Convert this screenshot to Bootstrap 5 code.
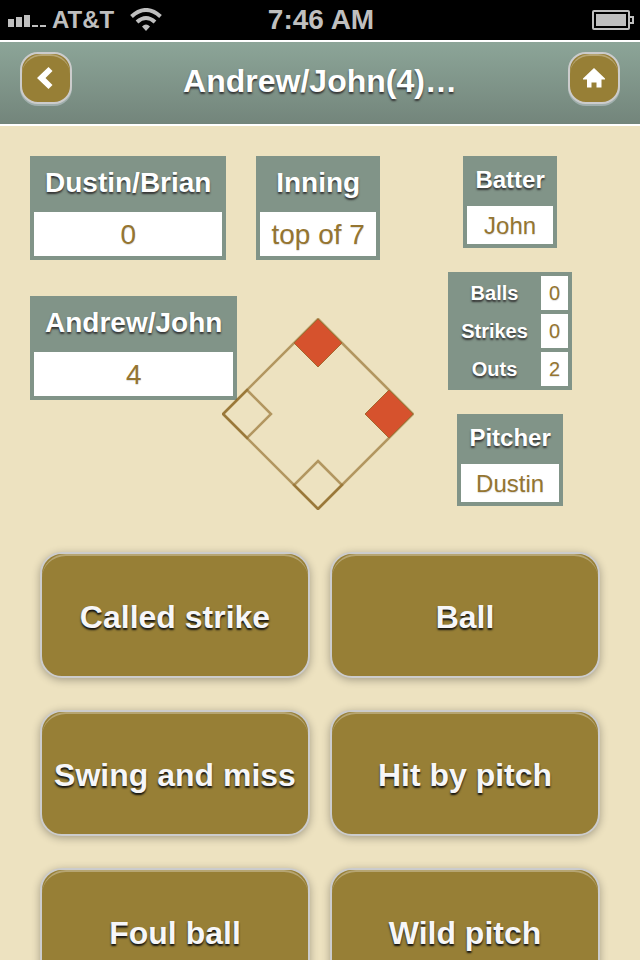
<!DOCTYPE html>
<html lang="en">
<head>
<meta charset="utf-8">
<meta name="viewport" content="width=device-width, initial-scale=1">
<title>Andrew/John(4)…</title>
<link href="https://cdn.jsdelivr.net/npm/bootstrap@5.3.0/dist/css/bootstrap.min.css" rel="stylesheet">
<style>
  body { background: #ede2c0; font-family: "Liberation Sans", Arial, sans-serif; }
  .status-strip { background: #000; color: #bfbfbf; height: 40px; padding: 0 6px 0 8px; font-weight: 700; }
  .side { flex: 1 1 0; }
  .carrier { font-size: 24px; line-height: 40px; margin: 0 16px 0 6px; }
  .clock { font-size: 28px; line-height: 40px; }
  .title-bar { background: linear-gradient(#8ca598, #73857b); border-top: 2px solid #fff; border-bottom: 2px solid #fff; height: 86px; padding: 10px 20px; }
  .title-bar h1 { font-size: 32px; line-height: 58px; font-weight: 700; color: #fff; text-shadow: 0 2px 2px #333; }
  .gold { background: #977f36; border: 2px solid #ccc; padding: 0; overflow: hidden; }
  .gold:hover { background: #a58c40; border-color: #ccc; }
  .sheen { border-top: 2px solid rgba(255,255,255,.3); }
  .tool { width: 52px; height: 52px; border-radius: 18px; box-shadow: 0 2px 0 rgba(200,210,215,.5); }
  .tool .sheen { border-radius: 20px; height: 48px; }
  .scroller { overflow-y: auto; scrollbar-width: none; padding: 30px; }
  .scroller::-webkit-scrollbar { display: none; }
  .board { border-collapse: separate; border-spacing: 4px; background: #819488; text-align: center; font-size: 28px; line-height: 28px; }
  .board th { color: #fff; font-weight: 700; padding: 9px 11px 11px; text-shadow: 0 2px 2px #333; }
  .board td { color: #957531; background: #fff; padding: 9px 11px 7px; text-shadow: 0 1px 1px #ddd; }
  .board.compact { font-size: 24px; line-height: 22px; }
  .board.compact th { padding: 9px 8px 11px; }
  .board.compact td { padding: 9px 8px 7px; }
  .board.counts { font-size: 20px; line-height: 18px; }
  .board.counts th { padding: 8px 9px; }
  .board.counts td { padding: 8px; }
  .teams { gap: 36px; }
  .top-row { gap: 30px; }
  .diamond { width: 192px; height: 192px; margin: 22px 0 0 -15px; }
  .people { gap: 24px; padding-right: 38px; }
  .plays { display: grid; grid-template-columns: 1fr 1fr; gap: 32px 20px; padding: 42px 10px 0; }
  .play { border-radius: 22px; height: 126px; box-shadow: 0 2px 8px rgba(0,0,0,.3); }
  .play .sheen { border-radius: 24px; height: 122px; font-size: 32px; line-height: 122px; font-weight: 700; color: #f6f6f8; text-shadow: 0 2px 2px #111; white-space: nowrap; }
</style>
</head>
<body class="vh-100 d-flex flex-column overflow-hidden">
<div class="status-strip d-flex align-items-center flex-shrink-0">
  <div class="side d-flex align-items-center">
    <svg width="38" height="13" viewBox="0 0 38 13" fill="#bfbfbf" aria-hidden="true"><path d="M0 5h6v8H0zM8 3h6v10H8zM16 1h6v12h-6zM24 11h6v2h-6zM32 11h6v2h-6z"/></svg>
    <span class="carrier">AT&amp;T</span>
    <svg width="32" height="24" viewBox="0 0 32 24" aria-hidden="true"><g fill="none" stroke="#bfbfbf" stroke-width="4"><path d="M1.500 8.500Q16-4.500 30.500 8.500"/><path d="M7 14Q16 6 25 14"/></g><path d="M12 18.500Q16 14.500 20 18.500L16 23z" fill="#bfbfbf"/></svg>
  </div>
  <time class="clock">7:46 AM</time>
  <div class="side d-flex justify-content-end">
    <svg width="42" height="20" viewBox="0 0 42 20" aria-hidden="true"><g fill="none" stroke="#bfbfbf" stroke-width="2"><rect x="1" y="1" width="36" height="18" rx="1"/><path d="M37 7h4v6h-4"/></g><path fill="#bfbfbf" d="M4 4h30v12H4z"/></svg>
  </div>
</div>
<header class="title-bar d-flex align-items-start justify-content-between flex-shrink-0">
  <button type="button" class="btn gold tool" aria-label="Back"><span class="sheen d-flex align-items-center justify-content-center"><svg width="18" height="24" viewBox="0 0 18 24" aria-hidden="true"><path d="M11.500 0L15.500 4L8.500 11L15.500 18L11.500 22L0 11z" fill="#fff"/></svg></span></button>
  <h1 class="m-0 text-truncate">Andrew/John(4)…</h1>
  <button type="button" class="btn gold tool" aria-label="Home"><span class="sheen d-flex align-items-center justify-content-center"><svg width="22" height="22" viewBox="0 0 22 22" aria-hidden="true"><path d="M11 0L22 10.500V11.500H18.500V19.500H13.500V14.500H8.500V19.500H4V11.500H0V10.500z" fill="#fff"/></svg></span></button>
</header>
<main class="scroller flex-fill">
  <section class="d-flex justify-content-between" aria-label="Scoreboard">
    <div class="teams d-flex flex-column">
      <div class="top-row d-flex">
        <table class="board"><thead><tr><th scope="col">Dustin/Brian</th></tr></thead><tbody><tr><td>0</td></tr></tbody></table>
        <table class="board"><thead><tr><th scope="col">Inning</th></tr></thead><tbody><tr><td>top of 7</td></tr></tbody></table>
      </div>
      <div class="d-flex align-items-start">
        <table class="board"><thead><tr><th scope="col">Andrew/John</th></tr></thead><tbody><tr><td>4</td></tr></tbody></table>
        <svg class="diamond flex-shrink-0 position-relative" viewBox="0 0 192 192" role="img" aria-label="Runners on first and second">
          <g stroke="#8a6420" stroke-opacity=".6" stroke-width="2.500" fill="none">
            <path d="M96 1L191 96L96 191L1 96z"/>
            <path d="M25 72L49 96L25 120L1 96z"/>
            <path d="M96 143L120 167L96 191L72 167z"/>
          </g>
          <g fill="#d6522d" stroke="#a5672d" stroke-width="1">
            <path d="M96 1L120 25L96 49L72 25z"/>
            <path d="M167 72L191 96L167 120L143 96z"/>
          </g>
        </svg>
      </div>
    </div>
    <div class="people d-flex flex-column align-items-center">
      <table class="board compact"><thead><tr><th scope="col">Batter</th></tr></thead><tbody><tr><td>John</td></tr></tbody></table>
      <table class="board counts"><tbody>
        <tr><th scope="row">Balls</th><td>0</td></tr>
        <tr><th scope="row">Strikes</th><td>0</td></tr>
        <tr><th scope="row">Outs</th><td>2</td></tr>
      </tbody></table>
      <table class="board compact"><thead><tr><th scope="col">Pitcher</th></tr></thead><tbody><tr><td>Dustin</td></tr></tbody></table>
    </div>
  </section>
  <section class="plays" aria-label="Pitch result">
    <button type="button" class="btn gold play"><span class="sheen d-block">Called strike</span></button>
    <button type="button" class="btn gold play"><span class="sheen d-block">Ball</span></button>
    <button type="button" class="btn gold play"><span class="sheen d-block">Swing and miss</span></button>
    <button type="button" class="btn gold play"><span class="sheen d-block">Hit by pitch</span></button>
    <button type="button" class="btn gold play"><span class="sheen d-block">Foul ball</span></button>
    <button type="button" class="btn gold play"><span class="sheen d-block">Wild pitch</span></button>
  </section>
</main>
<script src="https://cdn.jsdelivr.net/npm/bootstrap@5.3.0/dist/js/bootstrap.bundle.min.js"></script>
</body>
</html>
